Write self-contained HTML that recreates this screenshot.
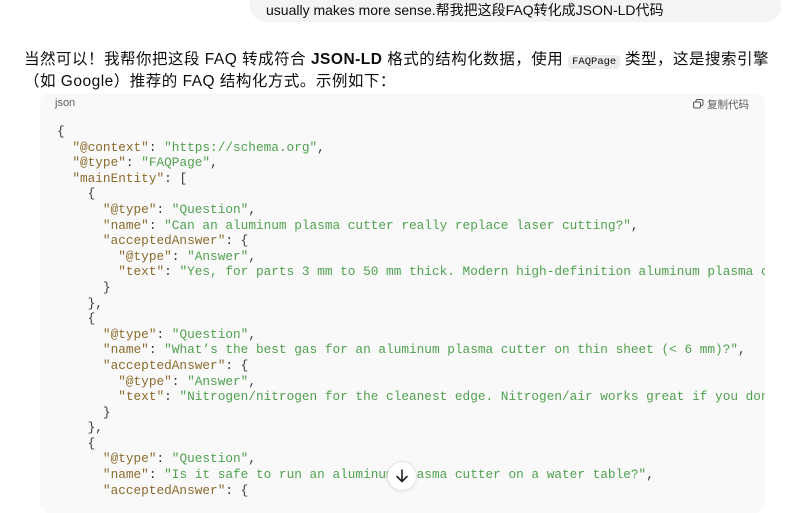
<!DOCTYPE html>
<html><head><meta charset="utf-8"><style>
body{margin:0;width:791px;height:501px;overflow:hidden;background:#fff;font-family:"Liberation Sans","Noto Sans CJK SC",sans-serif;color:#0d0d0d;position:relative}
.bubble{position:absolute;left:250px;top:-20px;width:531px;height:42px;background:#f4f4f4;border-radius:16px}
.bubble span{position:absolute;left:16px;top:21px;font-size:14px;line-height:18px}
.p{position:absolute;left:24px;top:50px;width:770px;font-size:15.5px;letter-spacing:0.5px;line-height:20px;white-space:nowrap}
code.i{font-family:"Liberation Mono",monospace;font-size:10.5px;letter-spacing:0;background:#ececec;border-radius:4px;padding:1px 4px}
.cb{position:absolute;left:40px;top:93px;width:725px;height:420px;background:#f9f9f9;border-radius:10px;overflow:hidden}
.lang{position:absolute;left:15px;top:4px;font-size:11px;color:#5d5d5d}
.copy{position:absolute;right:16px;top:4px;font-size:10.5px;color:#5d5d5d}
pre{position:absolute;left:17px;top:31px;margin:0;font-family:"Liberation Mono",monospace;font-size:12.75px;line-height:15.6px;color:#383a42;white-space:pre}
.k{color:#8b6b2c}.s{color:#50a14f}
.down{position:absolute;left:387px;top:461px;width:28px;height:28px;border-radius:50%;background:#fff;border:1px solid #e5e5e5;box-shadow:0 1px 3px rgba(0,0,0,.08)}
</style></head><body>
<div class="bubble"><span>usually makes more sense.帮我把这段FAQ转化成JSON-LD代码</span></div>
<div class="p">当然可以！我帮你把这段 FAQ 转成符合 <b>JSON-LD</b> 格式的结构化数据，使用 <code class="i">FAQPage</code> 类型，这是搜索引擎<br>（如 Google）推荐的 FAQ 结构化方式。示例如下：</div>
<div class="cb">
<div class="lang">json</div>
<div class="copy"><svg width="11" height="10" viewBox="0 0 11 10" style="vertical-align:-1px"><rect x="3" y="0.5" width="7" height="6" rx="1.5" fill="none" stroke="#555"/><rect x="0.5" y="3" width="7" height="6" rx="1.5" fill="#f9f9f9" stroke="#555"/></svg> 复制代码</div>
<pre>{
  <span class="k">"@context"</span>: <span class="s">"https://schema.org"</span>,
  <span class="k">"@type"</span>: <span class="s">"FAQPage"</span>,
  <span class="k">"mainEntity"</span>: [
    {
      <span class="k">"@type"</span>: <span class="s">"Question"</span>,
      <span class="k">"name"</span>: <span class="s">"Can an aluminum plasma cutter really replace laser cutting?"</span>,
      <span class="k">"acceptedAnswer"</span>: {
        <span class="k">"@type"</span>: <span class="s">"Answer"</span>,
        <span class="k">"text"</span>: <span class="s">"Yes, for parts 3 mm to 50 mm thick. Modern high-definition aluminum plasma cutters</span>
      }
    },
    {
      <span class="k">"@type"</span>: <span class="s">"Question"</span>,
      <span class="k">"name"</span>: <span class="s">"What’s the best gas for an aluminum plasma cutter on thin sheet (&lt; 6 mm)?"</span>,
      <span class="k">"acceptedAnswer"</span>: {
        <span class="k">"@type"</span>: <span class="s">"Answer"</span>,
        <span class="k">"text"</span>: <span class="s">"Nitrogen/nitrogen for the cleanest edge. Nitrogen/air works great if you don't</span>
      }
    },
    {
      <span class="k">"@type"</span>: <span class="s">"Question"</span>,
      <span class="k">"name"</span>: <span class="s">"Is it safe to run an aluminum plasma cutter on a water table?"</span>,
      <span class="k">"acceptedAnswer"</span>: {</pre>
</div>
<div class="down"><svg width="28" height="28" viewBox="0 0 28 28"><path d="M14 8v11M9 14.5l5 5 5-5" fill="none" stroke="#222" stroke-width="1.6" stroke-linecap="round" stroke-linejoin="round"/></svg></div>
</body></html>
